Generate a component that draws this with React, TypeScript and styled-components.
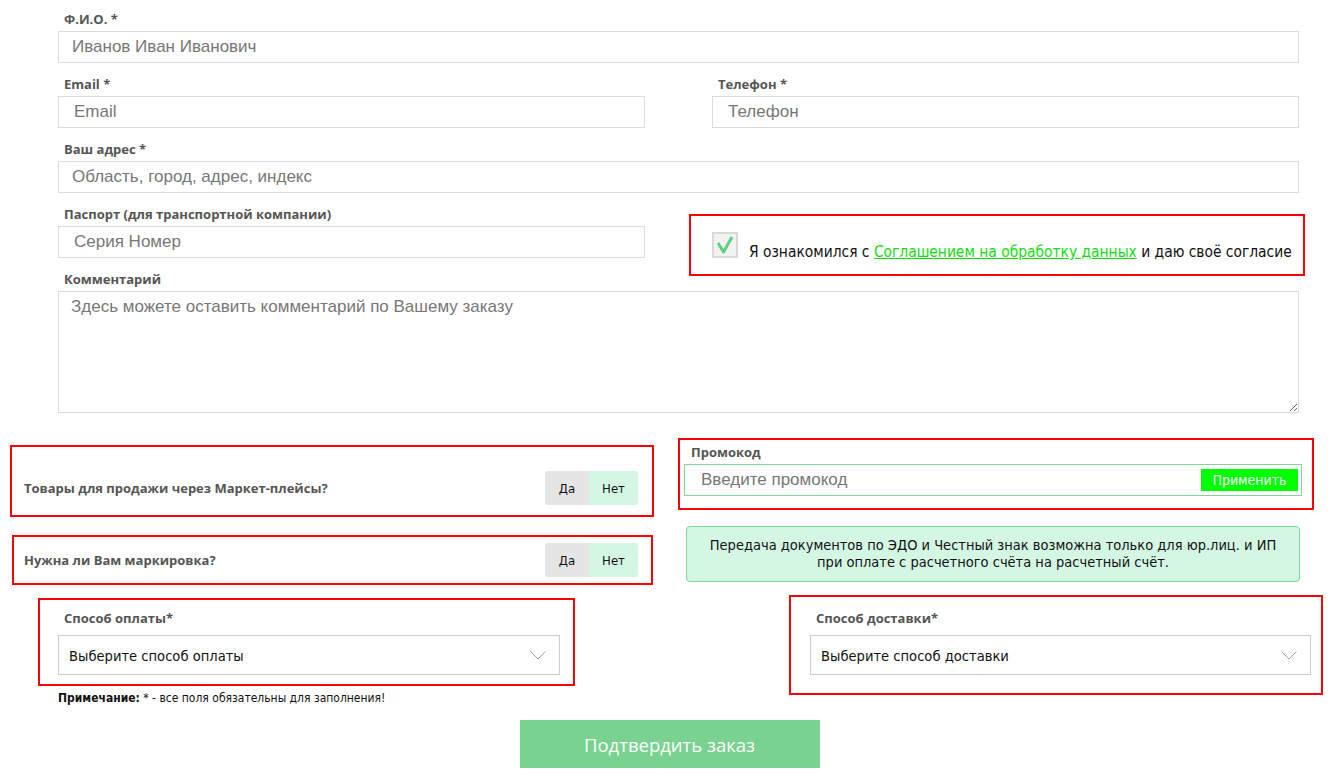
import React from "react";
import styled, { createGlobalStyle } from "styled-components";

const NARROW = `"Liberation Sans Narrow", "DejaVu Sans Condensed", "Open Sans", sans-serif`;

const Global = createGlobalStyle`
  html, body { margin: 0; padding: 0; background: #fff; }
  body { font-family: "Open Sans", "Liberation Sans", sans-serif; }
  * { box-sizing: border-box; }
`;

const Page = styled.div`
  width: 1336px;
  height: 778px;
  overflow: hidden;
`;

const TopForm = styled.div`
  margin-left: 58px;
  width: 1241px;
  padding-top: 10px;
`;

const Field = styled.div<{ $gap?: number }>`
  margin-top: ${(p) => p.$gap ?? 0}px;
`;

const Label = styled.div`
  font: 700 13px/18px "Open Sans", sans-serif;
  color: #555;
  margin-bottom: 3px;
  padding-left: 6px;
`;

const TextInput = styled.input<{ $indent?: number }>`
  display: block;
  width: 100%;
  height: 32px;
  border: 1px solid #dcdcdc;
  padding: 0 0 0 ${(p) => p.$indent ?? 13}px;
  font: 17px "Liberation Sans", Arial, sans-serif;
  color: #777;
  outline: none;
  background: #fff;
  &::placeholder { color: #777; opacity: 1; }
`;

const TwoCols = styled.div`
  display: grid;
  grid-template-columns: 1fr 1fr;
  column-gap: 67px;
  margin-top: 12px;
`;

const ConsentBox = styled.div`
  align-self: start;
  margin: 9px -6px -19px -23px;
  height: 62px;
  border: 2px solid #ff0000;
  display: flex;
  align-items: center;
  padding-left: 21px;
`;

const CheckSquare = styled.div`
  width: 26px;
  height: 26px;
  flex: none;
  background: #f2f2f2;
  border: 2px solid #d9d9d9;
  display: flex;
  align-items: center;
  justify-content: center;
`;

const ConsentText = styled.div`
  margin-left: 11px;
  margin-top: 14px;
  font: 15.4px/18px ${NARROW};
  color: #111;
  white-space: nowrap;
  a { color: #11dd11; text-decoration: underline; }
`;

const TextArea = styled.textarea`
  display: block;
  width: 100%;
  height: 122px;
  border: 1px solid #dcdcdc;
  padding: 4px 12px;
  font: 17px/22px "Liberation Sans", Arial, sans-serif;
  color: #777;
  outline: none;
  &::placeholder { color: #777; opacity: 1; }
`;

const Lower = styled.div`
  display: grid;
  grid-template-columns: 668px 668px;
  margin-top: 25px;
`;

const Column = styled.div`
  display: flex;
  flex-direction: column;
  align-items: flex-start;
`;

const RedBox = styled.div<{ $ml: number; $mt: number; $w: number; $h: number }>`
  margin-left: ${(p) => p.$ml}px;
  margin-top: ${(p) => p.$mt}px;
  width: ${(p) => p.$w}px;
  height: ${(p) => p.$h}px;
  border: 2px solid #ff0000;
`;

const QuestionBox = styled(RedBox)<{ $pt: number; $pb: number; $pl: number; $pr: number }>`
  display: flex;
  align-items: center;
  justify-content: space-between;
  padding: ${(p) => `${p.$pt}px ${p.$pr}px ${p.$pb}px ${p.$pl}px`};
`;

const Question = styled.div`
  font: 700 13px/18px "Open Sans", sans-serif;
  color: #555;
`;

const Toggle = styled.div`
  display: flex;
  height: 34px;
`;

const ToggleBtn = styled.div<{ $yes?: boolean }>`
  width: ${(p) => (p.$yes ? 44 : 49)}px;
  display: flex;
  align-items: center;
  justify-content: center;
  font: 13px ${NARROW};
  color: #111;
  background: ${(p) => (p.$yes ? "#e5e5e5" : "#d4f7e4")};
  border-radius: ${(p) => (p.$yes ? "3px 0 0 3px" : "0 3px 3px 0")};
`;

const PromoBox = styled(RedBox)`
  padding: 3px 10px 0 4px;
`;

const PromoLabel = styled(Label)`
  padding-left: 7px;
`;

const PromoField = styled.div`
  height: 32px;
  border: 1px solid #7ed69b;
  display: flex;
  align-items: center;
  padding: 0 3px 0 16px;
  font: 17px "Liberation Sans", Arial, sans-serif;
  color: #777;
`;

const PromoInput = styled.input`
  flex: 1;
  border: none;
  outline: none;
  padding: 0;
  font: inherit;
  color: #777;
  &::placeholder { color: #777; opacity: 1; }
`;

const ApplyBtn = styled.button`
  width: 97px;
  height: 22px;
  border: none;
  background: #00ff00;
  color: #fff;
  font: 14px ${NARROW};
  padding: 0;
`;

const InfoBox = styled.div`
  margin: 16px 0 0 18px;
  width: 614px;
  height: 56px;
  background: #d4f7e4;
  border: 1px solid #7ed69b;
  border-radius: 4px;
  display: flex;
  align-items: center;
  justify-content: center;
  text-align: center;
  font: 14.5px/17px ${NARROW};
  color: #111;
`;

const SelectBox = styled(RedBox)<{ $pt: number; $pl: number }>`
  padding: ${(p) => p.$pt}px 0 0 ${(p) => p.$pl}px;
`;

const Select = styled.div<{ $w: number }>`
  margin-top: 8px;
  width: ${(p) => p.$w}px;
  height: 40px;
  border: 1px solid #cccccc;
  display: flex;
  align-items: center;
  justify-content: space-between;
  padding: 0 13px 0 10px;
  font: 14.6px ${NARROW};
  color: #111;
`;

const Note = styled.div`
  margin: 5px 0 0 58px;
  font: 12px/14px ${NARROW};
  color: #111;
  b { font-weight: 700; }
`;

const SubmitRow = styled.div`
  display: flex;
  justify-content: center;
  margin-top: 15px;
  padding-left: 3px;
`;

const Submit = styled.button`
  width: 300px;
  height: 48px;
  border: none;
  background: #79d28f;
  color: #fff;
  font: 18.5px "Open Sans", sans-serif;
`;

const Chevron = () => (
  <svg width="16" height="9" viewBox="0 0 16 9">
    <polyline points="0.5,0.5 8,8 15.5,0.5" fill="none" stroke="#a0a0a0" strokeWidth="1" />
  </svg>
);

const Check = () => (
  <svg width="20" height="20" viewBox="0 0 20 20">
    <path d="M3 8 L8.5 17 L17 2" fill="none" stroke="#5fd07f" strokeWidth="3" strokeLinejoin="round" />
  </svg>
);

export default function App() {
  return (
    <Page>
      <Global />
      <TopForm>
        <Field>
          <Label>Ф.И.О. *</Label>
          <TextInput placeholder="Иванов Иван Иванович" />
        </Field>
        <TwoCols>
          <Field>
            <Label>Email *</Label>
            <TextInput $indent={15} placeholder="Email" />
          </Field>
          <Field>
            <Label>Телефон *</Label>
            <TextInput $indent={15} placeholder="Телефон" />
          </Field>
        </TwoCols>
        <Field $gap={12}>
          <Label>Ваш адрес *</Label>
          <TextInput placeholder="Область, город, адрес, индекс" />
        </Field>
        <TwoCols>
          <Field>
            <Label>Паспорт (для транспортной компании)</Label>
            <TextInput $indent={15} placeholder="Серия Номер" />
          </Field>
          <ConsentBox>
            <CheckSquare>
              <Check />
            </CheckSquare>
            <ConsentText>
              Я ознакомился с <a href="#">Соглашением на обработку данных</a> и даю своё согласие
            </ConsentText>
          </ConsentBox>
        </TwoCols>
        <Field $gap={12}>
          <Label>Комментарий</Label>
          <TextArea placeholder="Здесь можете оставить комментарий по Вашему заказу" />
        </Field>
      </TopForm>

      <Lower>
        <Column>
          <QuestionBox $ml={10} $mt={7} $w={644} $h={72} $pt={24} $pb={10} $pl={12} $pr={14}>
            <Question>Товары для продажи через Маркет-плейсы?</Question>
            <Toggle>
              <ToggleBtn $yes>Да</ToggleBtn>
              <ToggleBtn>Нет</ToggleBtn>
            </Toggle>
          </QuestionBox>
          <QuestionBox $ml={12} $mt={18} $w={641} $h={50} $pt={0} $pb={0} $pl={10} $pr={13}>
            <Question>Нужна ли Вам маркировка?</Question>
            <Toggle>
              <ToggleBtn $yes>Да</ToggleBtn>
              <ToggleBtn>Нет</ToggleBtn>
            </Toggle>
          </QuestionBox>
        </Column>
        <Column>
          <PromoBox $ml={10} $mt={0} $w={636} $h={72}>
            <PromoLabel>Промокод</PromoLabel>
            <PromoField>
              <PromoInput placeholder="Введите промокод" />
              <ApplyBtn>Применить</ApplyBtn>
            </PromoField>
          </PromoBox>
          <InfoBox>
            Передача документов по ЭДО и Честный знак возможна только для юр.лиц. и ИП
            <br />
            при оплате с расчетного счёта на расчетный счёт.
          </InfoBox>
        </Column>

        <Column>
          <SelectBox $ml={38} $mt={13} $w={537} $h={88} $pt={9} $pl={18}>
            <Label>Способ оплаты*</Label>
            <Select $w={502}>
              <span>Выберите способ оплаты</span>
              <Chevron />
            </Select>
          </SelectBox>
          <Note>
            <b>Примечание:</b> * - все поля обязательны для заполнения!
          </Note>
        </Column>
        <Column>
          <SelectBox $ml={121} $mt={10} $w={534} $h={100} $pt={12} $pl={19}>
            <Label>Способ доставки*</Label>
            <Select $w={501}>
              <span>Выберите способ доставки</span>
              <Chevron />
            </Select>
          </SelectBox>
        </Column>
      </Lower>

      <SubmitRow>
        <Submit>Подтвердить заказ</Submit>
      </SubmitRow>
    </Page>
  );
}
